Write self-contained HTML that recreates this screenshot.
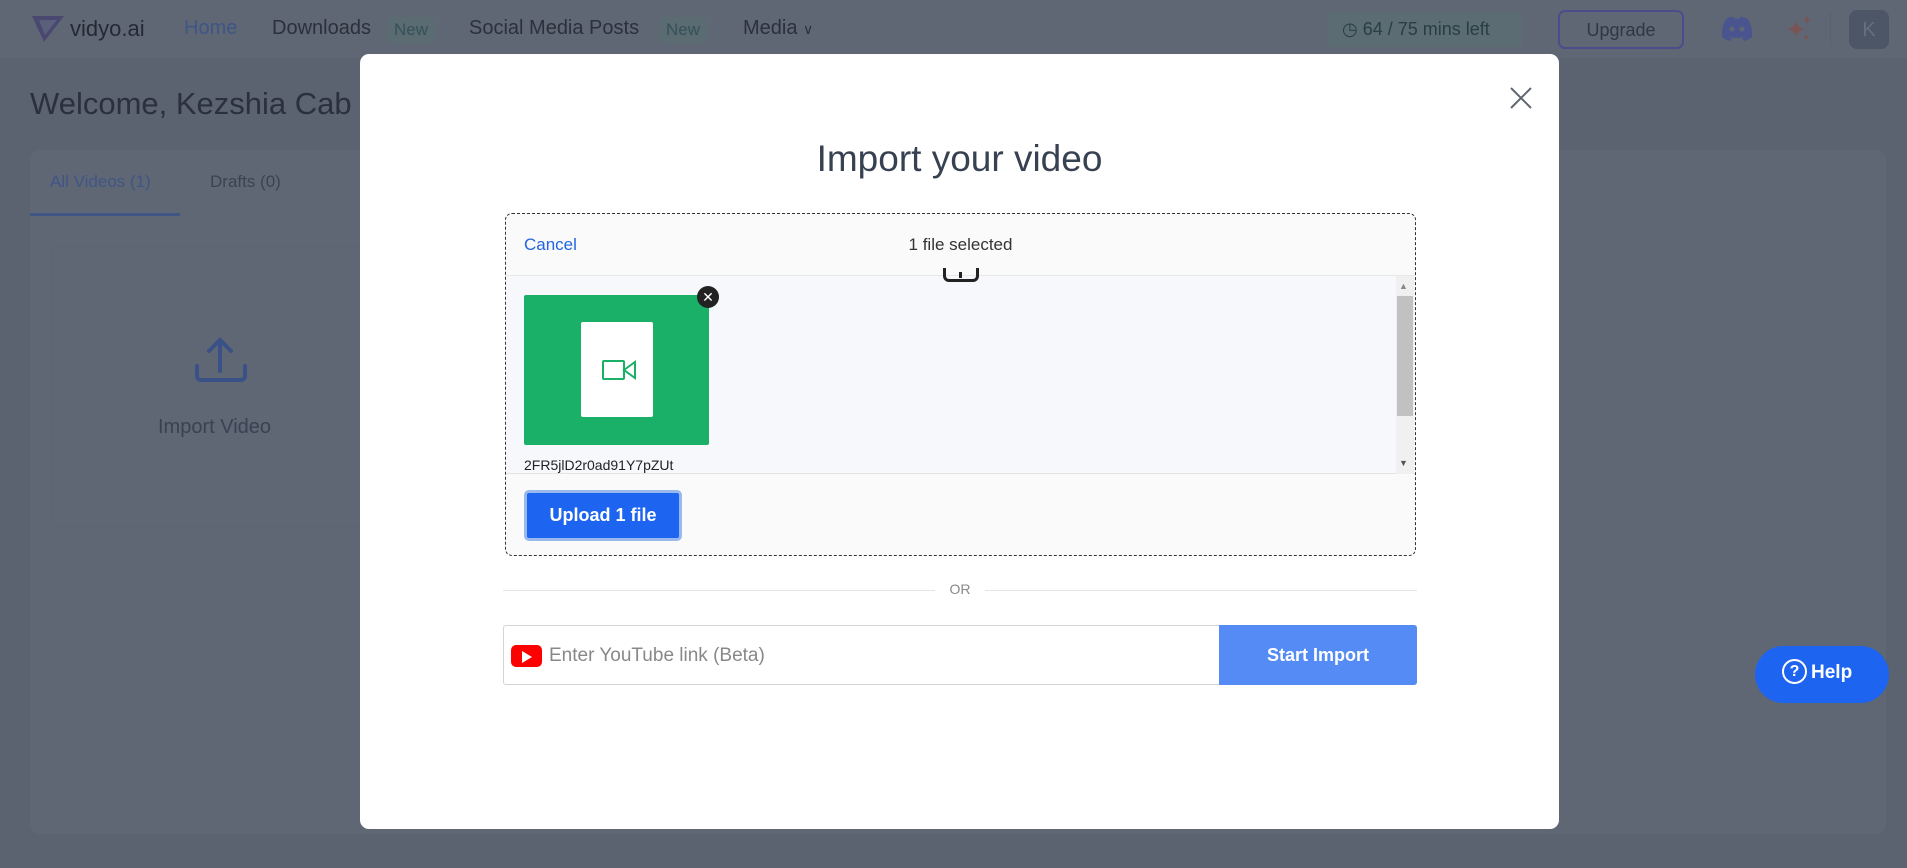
<!DOCTYPE html>
<html><head><meta charset="utf-8"><style>
*{box-sizing:border-box;margin:0;padding:0}
body{width:1907px;height:868px;overflow:hidden;background:#5b6270;font-family:"Liberation Sans",sans-serif;position:relative}
.abs{position:absolute}
.nav{left:0;top:0;width:1907px;height:58px;background:#606774}
.navt{top:17px;font-size:20px;color:#2a313c}
.badge{font-size:17px;color:#35505a;background:#5b6b72;padding:3px 7px;border-radius:4px;top:17px}
.panel{left:30px;top:150px;width:1856px;height:684px;background:#606774;border-radius:10px}
.modal{left:360px;top:54px;width:1199px;height:775px;background:#fff;border-radius:9px}
</style></head><body>
<div class="abs nav"></div>
<svg class="abs" style="left:30px;top:14px" width="36" height="30" viewBox="0 0 36 30"><path d="M2 2 L34 2 L14 28 Z" fill="#4a4870"/><path d="M9 6 L27 6 L15 21Z" fill="#5a5f7a"/></svg>
<div class="abs navt" style="left:70px;font-size:22px;color:#232a35;top:16px">vidyo.ai</div>
<div class="abs navt" style="left:184px;color:#3e5586">Home</div>
<div class="abs navt" style="left:272px">Downloads</div>
<div class="abs badge" style="left:387px">New</div>
<div class="abs navt" style="left:469px">Social Media Posts</div>
<div class="abs badge" style="left:659px">New</div>
<div class="abs navt" style="left:743px">Media <span style="font-size:14px">∨</span></div>
<div class="abs" style="left:1328px;top:12px;width:194px;height:35px;background:#5c6c73;border-radius:5px;color:#2a3d44;font-size:18px;padding:7px 0 0 14px">◷ 64 / 75 mins left</div>
<div class="abs" style="left:1558px;top:10px;width:126px;height:39px;border:2px solid #4b4c8c;border-radius:7px;color:#2f3744;font-size:18px;text-align:center;padding-top:8px">Upgrade</div>
<svg class="abs" style="left:1721px;top:15px" width="32" height="27" viewBox="0 0 32 27"><path d="M5 4Q11 1 13 2L14 4Q16 3.5 18 4L19 2Q22 1 27 4Q32 12 31 22Q27 25 23 26L21 23Q24 22 25 21Q16 25 7 21Q8 22 11 23L9 26Q5 25 1 22Q0 12 5 4Z" fill="#4a5590"/><circle cx="11" cy="14" r="2.5" fill="#606774"/><circle cx="21" cy="14" r="2.5" fill="#606774"/></svg>
<svg class="abs" style="left:1786px;top:14px" width="28" height="30" viewBox="0 0 28 30" fill="#7a5455"><path d="M10 6Q11 14 19 15Q11 16 10 24Q9 16 1 15Q9 14 10 6Z"/><path d="M21 1Q21.5 5 25 5.5Q21.5 6 21 10Q20.5 6 17 5.5Q20.5 5 21 1Z"/><path d="M20 20Q20.5 23 23 23.5Q20.5 24 20 27Q19.5 24 17 23.5Q19.5 23 20 20Z"/></svg>
<div class="abs" style="left:1830px;top:12px;width:1px;height:35px;background:#5a616e"></div>
<div class="abs" style="left:1849px;top:10px;width:40px;height:39px;background:#4c5666;border-radius:8px;color:#64707c;font-size:20px;text-align:center;padding-top:9px">K</div>
<div class="abs" style="left:30px;top:86px;font-size:31px;color:#2a313c">Welcome, Kezshia Cab</div>
<div class="abs panel"></div>
<div class="abs" style="left:50px;top:172px;font-size:17px;color:#3e5586">All Videos (1)</div>
<div class="abs" style="left:210px;top:172px;font-size:17px;color:#3c4350">Drafts (0)</div>
<div class="abs" style="left:30px;top:213px;width:150px;height:3px;background:#3e5586"></div>
<div class="abs" style="left:51px;top:246px;width:330px;height:281px;border:1px solid #5d6471;border-radius:10px"></div>
<svg class="abs" style="left:194px;top:336px" width="54" height="54" viewBox="0 0 54 54" fill="none" stroke="#3a5188" stroke-width="4" stroke-linecap="round"><path d="M26 35V4M15 15L26 4 37 15M3 30v10a4 4 0 0 0 4 4h40a4 4 0 0 0 4-4V30"/></svg>
<div class="abs" style="left:158px;top:416px;font-size:20px;color:#3a4150">Import Video</div>
<div class="abs" style="left:1755px;top:646px;width:134px;height:57px;background:#1d64f0;border-radius:29px;color:#fff;font-weight:bold;font-size:19px;padding:16px 0 0 27px"><span style="display:inline-block;width:25px;height:25px;border:2px solid #fff;border-radius:50%;text-align:center;font-size:16px;line-height:21px;vertical-align:middle;margin-top:-3px;margin-right:4px">?</span>Help</div>

<div class="abs modal"></div>
<svg class="abs" style="left:1510px;top:87px" width="22" height="22" stroke="#5f6670" stroke-width="2"><path d="M1 1L21 21M21 1L1 21"/></svg>
<div class="abs" style="left:360px;width:1199px;top:138px;text-align:center;font-size:37px;color:#374151">Import your video</div>
<div class="abs" style="left:505px;top:213px;width:911px;height:343px;border:1px dashed #333;border-radius:7px;background:#fafafa;overflow:hidden">
 <div class="abs" style="left:0;top:0;width:100%;height:62px;border-bottom:1px solid #e8e8e8"></div>
 <div class="abs" style="left:18px;top:21px;font-size:17px;color:#2266dd">Cancel</div>
 <div class="abs" style="left:0;width:100%;top:21px;text-align:center;font-size:17px;color:#333">1 file selected</div>
 <div class="abs" style="left:0;top:62px;width:100%;height:198px;background:#f6f8fc;border-bottom:1px solid #e4e4e4"></div>
 <div class="abs" style="left:437px;top:54px;width:36px;height:14px;border:3px solid #222;border-top:none;border-radius:0 0 6px 6px"></div>
 <div class="abs" style="left:453px;top:58px;width:3px;height:6px;background:#222"></div>
 <div class="abs" style="left:890px;top:62px;width:18px;height:198px;background:#f0f0f0"></div>
 <div class="abs" style="left:891px;top:82px;width:16px;height:120px;background:#c1c1c1"></div>
 <div class="abs" style="left:893px;top:67px;font-size:9px;color:#888">▲</div>
 <div class="abs" style="left:893px;top:244px;font-size:9px;color:#555">▼</div>
 <div class="abs" style="left:18px;top:81px;width:185px;height:150px;background:#1bb068;border-radius:2px"></div>
 <div class="abs" style="left:75px;top:108px;width:72px;height:95px;background:#fff;border-radius:2px"></div>
 <svg class="abs" style="left:96px;top:145px" width="36" height="22" fill="none" stroke="#1bb068" stroke-width="2"><rect x="1" y="2" width="21" height="18" rx="1"/><path d="M22 11L33 3V19Z"/></svg>
 <div class="abs" style="left:191px;top:72px;width:22px;height:22px;background:#222;border-radius:50%;color:#fff;font-size:14px;text-align:center;line-height:22px">✕</div>
 <div class="abs" style="left:18px;top:243px;font-size:14px;color:#222">2FR5jlD2r0ad91Y7pZUt</div>
 <div class="abs" style="left:18px;top:276px;width:158px;height:51px;background:#1d64f0;border:3px solid #98b8ee;border-radius:5px;color:#fff;font-size:18px;font-weight:bold;text-align:center;line-height:45px">Upload 1 file</div>
</div>
<div class="abs" style="left:503px;top:590px;width:914px;height:1px;background:#e4e4e4"></div>
<div class="abs" style="left:935px;top:581px;width:50px;height:18px;background:#fff;text-align:center;font-size:14px;color:#888">OR</div>
<div class="abs" style="left:503px;top:625px;width:914px;height:60px;border:1px solid #d4d4d4;border-radius:3px"></div>
<div class="abs" style="left:511px;top:645px;width:31px;height:22px;background:#f00;border-radius:5px"></div>
<div class="abs" style="left:522px;top:651px;width:0;height:0;border-left:10px solid #fff;border-top:6px solid transparent;border-bottom:6px solid transparent"></div>
<div class="abs" style="left:549px;top:645px;font-size:19px;color:#888">Enter YouTube link (Beta)</div>
<div class="abs" style="left:1219px;top:625px;width:198px;height:60px;background:#548bf4;border-radius:0 3px 3px 0;color:#fff;font-size:18px;font-weight:bold;text-align:center;line-height:60px">Start Import</div>
</body></html>
